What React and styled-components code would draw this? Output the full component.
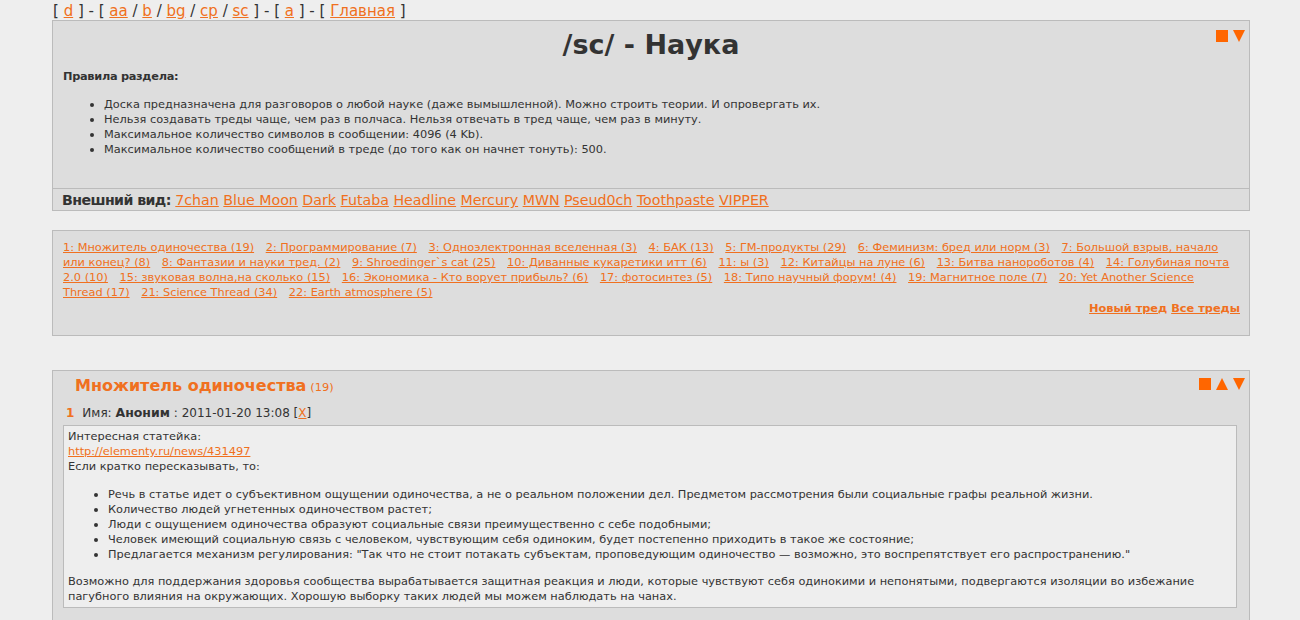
import styled, { createGlobalStyle } from "styled-components";

const Global = createGlobalStyle`
  html, body { margin: 0; padding: 0; background: #eeeeee; }
  body {
    font-family: "DejaVu Sans", Verdana, sans-serif;
    font-size: 11.35px;
    color: #333333;
  }
  a { color: #f07020; text-decoration: underline; }
`;

const Page = styled.div`
  width: 1198px;
  margin-left: 52px;
`;

const TopNav = styled.div`
  font-size: 15px;
  line-height: 17px;
  padding: 3px 0 0 1px;
  color: #333;
  white-space: nowrap;
`;

const Box = styled.div`
  position: relative;
  background: #dddddd;
  border: 1px solid #bbbbbb;
  margin-top: ${(p) => p.$mt || 0}px;
`;

const Controls = styled.div`
  position: absolute;
  top: ${(p) => p.$top}px;
  right: 4px;
  display: flex;
  align-items: center;
  gap: 5px;
`;

const Sq = styled.span`
  width: 12px;
  height: 12px;
  background: #ff6600;
  display: block;
`;

const Tri = styled.span`
  width: 0;
  height: 0;
  border-left: 6px solid transparent;
  border-right: 6px solid transparent;
  ${(p) =>
    p.$up
      ? "border-bottom: 12px solid #ff6600;"
      : "border-top: 12px solid #ff6600;"}
  display: block;
`;

const Title = styled.h1`
  margin: 0;
  padding-top: 7px;
  text-align: center;
  font-size: 27px;
  line-height: 34px;
  font-weight: bold;
  color: #333;
`;

const Rules = styled.div`
  padding: 7px 10px 0 10px;
  height: 126px;
  box-sizing: border-box;
`;

const RulesHead = styled.div`
  font-weight: bold;
  line-height: 15px;
  letter-spacing: -0.3px;
`;

const List = styled.ul`
  margin: ${(p) => p.$m || "13px 0 0 0"};
  padding-left: ${(p) => p.$pl || 41}px;
  line-height: 15px;
`;

const StyleBar = styled.div`
  border-top: 1px solid #bbbbbb;
  padding: 2px 10px 1px 9px;
  font-size: 14.2px;
  line-height: 18px;
  b { color: #333; letter-spacing: -0.6px; }
`;

const ThreadList = styled.div`
  padding: 9px 12px 19px 10px;
  line-height: 15px;
  a { margin-right: 8px; }
`;

const Actions = styled.div`
  text-align: right;
  margin: 1px -3px 0 0;
  font-weight: bold;
  line-height: 15px;
  a { margin: 0; }
`;

const ThreadTitle = styled.div`
  padding: 3px 0 0 22px;
  line-height: 24px;
  a {
    font-size: 16px;
    font-weight: bold;
    text-decoration: none;
    color: #f07020;
  }
  span { color: #f07020; margin-left: 4px; }
`;

const PostHead = styled.div`
  padding: 6px 0 0 13px;
  line-height: 16px;
  font-size: 12px;
  b.num { color: #f07020; margin-right: 8px; }
  b.name { font-size: 12.5px; }
`;

const PostBody = styled.div`
  margin: 4px 12px 40px 10px;
  background: #eeeeee;
  border: 1px solid #bbbbbb;
  padding: 3px 4px 3px 4px;
  line-height: 15px;
  p { margin: 0; }
`;

export default function App() {
  const threads = [
    "1: Множитель одиночества (19)",
    "2: Программирование (7)",
    "3: Одноэлектронная вселенная (3)",
    "4: БАК (13)",
    "5: ГМ-продукты (29)",
    "6: Феминизм: бред или норм (3)",
    "7: Большой взрыв, начало или конец? (8)",
    "8: Фантазии и науки тред. (2)",
    "9: Shroedinger`s cat (25)",
    "10: Диванные кукаретики итт (6)",
    "11: ы (3)",
    "12: Китайцы на луне (6)",
    "13: Битва нанороботов (4)",
    "14: Голубиная почта 2.0 (10)",
    "15: звуковая волна,на сколько (15)",
    "16: Экономика - Кто ворует прибыль? (6)",
    "17: фотосинтез (5)",
    "18: Типо научный форум! (4)",
    "19: Магнитное поле (7)",
    "20: Yet Another Science Thread (17)",
    "21: Science Thread (34)",
    "22: Earth atmosphere (5)",
  ];
  const styles = ["7chan", "Blue Moon", "Dark", "Futaba", "Headline", "Mercury", "MWN", "Pseud0ch", "Toothpaste", "VIPPER"];

  return (
    <Page>
      <Global />
      <TopNav>
        [ <a href="#">d</a> ] - [ <a href="#">aa</a> / <a href="#">b</a> / <a href="#">bg</a> / <a href="#">cp</a> /{" "}
        <a href="#">sc</a> ] - [ <a href="#">a</a> ] - [ <a href="#">Главная</a> ]
      </TopNav>

      <Box>
        <Controls $top={9}>
          <Sq />
          <Tri />
        </Controls>
        <Title>/sc/ - Наука</Title>
        <Rules>
          <RulesHead>Правила раздела:</RulesHead>
          <List>
            <li>Доска предназначена для разговоров о любой науке (даже вымышленной). Можно строить теории. И опровергать их.</li>
            <li>Нельзя создавать треды чаще, чем раз в полчаса. Нельзя отвечать в тред чаще, чем раз в минуту.</li>
            <li>Максимальное количество символов в сообщении: 4096 (4 Kb).</li>
            <li>Максимальное количество сообщений в треде (до того как он начнет тонуть): 500.</li>
          </List>
        </Rules>
        <StyleBar>
          <b>Внешний вид:</b>{" "}
          {styles.map((s) => (
            <span key={s}>
              <a href="#">{s}</a>{" "}
            </span>
          ))}
        </StyleBar>
      </Box>

      <Box $mt={19}>
        <ThreadList>
          {threads.map((t, i) => (
            <span key={i}>
              <a href="#">{t}</a>{" "}
            </span>
          ))}
          <Actions>
            <a href="#">Новый тред</a> <a href="#">Все треды</a>
          </Actions>
        </ThreadList>
      </Box>

      <Box $mt={34}>
        <Controls $top={7}>
          <Sq />
          <Tri $up />
          <Tri />
        </Controls>
        <ThreadTitle>
          <a href="#">Множитель одиночества</a>
          <span>(19)</span>
        </ThreadTitle>
        <PostHead>
          <b className="num">1</b>Имя: <b className="name">Аноним</b> : 2011-01-20 13:08 [<a href="#">X</a>]
        </PostHead>
        <PostBody>
          <p>Интересная статейка:</p>
          <p><a href="#">http://elementy.ru/news/431497</a></p>
          <p>Если кратко пересказывать, то:</p>
          <List $m="13px 0 12px 0" $pl={40}>
            <li>Речь в статье идет о субъективном ощущении одиночества, а не о реальном положении дел. Предметом рассмотрения были социальные графы реальной жизни.</li>
            <li>Количество людей угнетенных одиночеством растет;</li>
            <li>Люди с ощущением одиночества образуют социальные связи преимущественно с себе подобными;</li>
            <li>Человек имеющий социальную связь с человеком, чувствующим себя одиноким, будет постепенно приходить в такое же состояние;</li>
            <li>Предлагается механизм регулирования: "Так что не стоит потакать субъектам, проповедующим одиночество — возможно, это воспрепятствует его распространению."</li>
          </List>
          <p>
            Возможно для поддержания здоровья сообщества вырабатывается защитная реакция и люди, которые чувствуют себя одинокими и непонятыми, подвергаются изоляции во избежание пагубного влияния на окружающих. Хорошую выборку таких людей мы можем наблюдать на чанах.
          </p>
        </PostBody>
      </Box>
    </Page>
  );
}
